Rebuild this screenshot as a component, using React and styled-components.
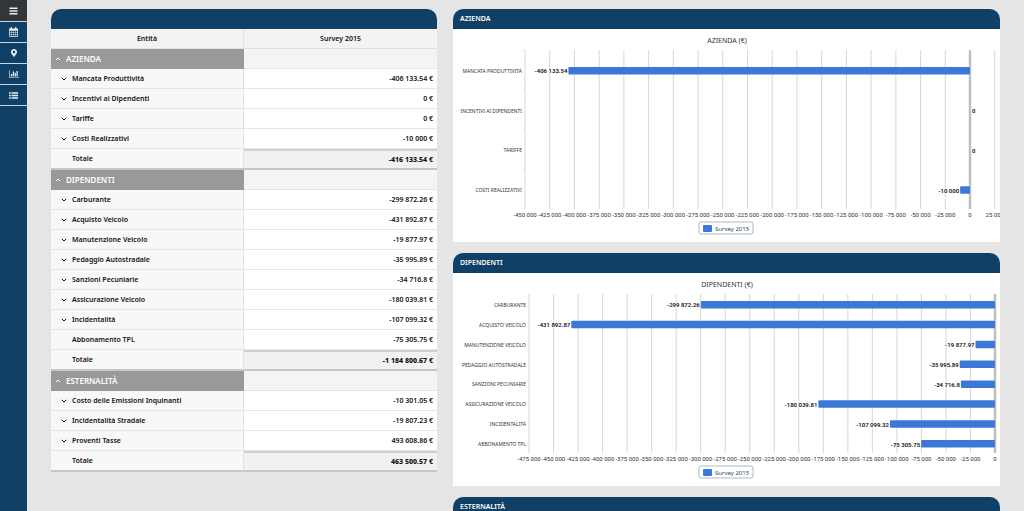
import { Fragment, useState } from 'react';
import styled, { createGlobalStyle } from 'styled-components';
import { FaMapMarkerAlt } from 'react-icons/fa';

const GlobalStyle = createGlobalStyle`
  * {
    box-sizing: border-box;
  }
  body {
    margin: 0;
    background-color: #e5e5e5;
    font-family: 'Noto Sans', 'Open Sans', sans-serif;
    font-size: 7px;
    color: #111;
  }
`;

const Page = styled.div`
  display: flex;
  height: 100vh;
  overflow: hidden;
`;

const Sidebar = styled.nav`
  display: flex;
  flex-direction: column;
  flex: 0 0 27px;
  background-color: #104065;
`;

const NavBtn = styled.button`
  display: flex;
  align-items: center;
  justify-content: center;
  height: ${(props) => (props.$menu ? '22px' : '21px')};
  padding: 0;
  border: none;
  border-bottom: 1px solid #c3d9ea;
  background-color: ${(props) => (props.$menu ? '#333638' : 'transparent')};
  color: #e6eff6;
  font-size: 8px;
  cursor: pointer;
`;

const Content = styled.main`
  display: grid;
  grid-template-columns: 386fr 547fr;
  gap: 16px;
  flex: 1;
  align-items: start;
  padding: 9px 24px 0;
`;

const Column = styled.div`
  display: flex;
  flex-direction: column;
  gap: 11px;
  min-width: 0;
`;

const Panel = styled.section`
  background-color: white;
  border-radius: 10px 10px 0 0;
  overflow: hidden;
`;

const PanelHeader = styled.h2`
  height: 20px;
  margin: 0;
  padding: 0 7px;
  background-color: #104065;
  color: white;
  font-size: 7px;
  font-weight: 600;
  line-height: 20px;
`;

const Table = styled.table`
  width: 100%;
  border-collapse: separate;
  border-spacing: 0;
  table-layout: fixed;
  line-height: 10px;
`;

const HeadCell = styled.th`
  height: 20px;
  padding: 0;
  border-right: 1px solid #e4e4e4;
  border-bottom: 1px solid #e0e0e0;
  background-color: #f3f3f3;
  font-weight: 600;
  &:last-child {
    border-right: none;
  }
`;

const SectionCell = styled.th`
  height: 20px;
  padding: 0 4px;
  background-color: #999;
  color: white;
  font-size: 8px;
  font-weight: 600;
  text-align: left;
`;

const EmptyCell = styled.td`
  padding: 0;
  border-bottom: 1px solid #e4e4e4;
  background-color: #f4f4f4;
`;

const NameCell = styled.th`
  height: ${(props) => (props.$total ? '21px' : '20px')};
  padding: 0 0 0 10px;
  border-right: 1px solid #e2e2e2;
  border-bottom: ${(props) =>
    props.$total ? '2px solid #c6c6c6' : '1px solid #e6e6e6'};
  background-color: #f8f8f8;
  font-weight: 600;
  text-align: left;
`;

const ValueCell = styled.td`
  padding: 0 4px 0 0;
  border-top: ${(props) => (props.$total ? '2px solid #d0d0d0' : 'none')};
  border-bottom: ${(props) =>
    props.$total ? '2px solid #c6c6c6' : '1px solid #e6e6e6'};
  background-color: ${(props) => (props.$total ? '#f1f1f1' : 'white')};
  font-weight: ${(props) => (props.$total ? 800 : 600)};
  text-align: right;
`;

const Toggle = styled.button`
  display: flex;
  align-items: center;
  gap: 5px;
  padding: 0;
  border: none;
  background: none;
  color: inherit;
  font: inherit;
  cursor: pointer;
`;

const Label = styled.span`
  display: block;
  padding-left: 11px;
`;

const Chart = styled.svg`
  display: block;
  width: 100%;
  height: auto;
`;

const ChartTitle = styled.text`
  fill: #333;
  font-size: 7px;
  text-anchor: middle;
`;

const TickText = styled.text`
  fill: #333;
  font-family: Roboto, sans-serif;
  font-size: 6px;
  text-anchor: middle;
`;

const CategoryText = styled.text`
  fill: #333;
  font-size: 5px;
  text-anchor: end;
`;

const BarText = styled.text`
  fill: #111;
  font-family: Roboto, sans-serif;
  font-size: 6px;
  font-weight: 600;
  text-anchor: ${(props) => props.$anchor};
  paint-order: stroke;
  stroke: white;
  stroke-width: 1px;
`;

const LegendText = styled.text`
  fill: #274b6d;
  font-size: 6px;
`;

const sections = [
  {
    name: 'AZIENDA',
    rows: [
      ['Mancata Produttività', -406133.54],
      ['Incentivi ai Dipendenti', 0],
      ['Tariffe', 0],
      ['Costi Realizzativi', -10000],
    ],
    total: -416133.54,
  },
  {
    name: 'DIPENDENTI',
    rows: [
      ['Carburante', -299872.26],
      ['Acquisto Veicolo', -431892.87],
      ['Manutenzione Veicolo', -19877.97],
      ['Pedaggio Autostradale', -35995.89],
      ['Sanzioni Pecuniarie', -34716.8],
      ['Assicurazione Veicolo', -180039.81],
      ['Incidentalità', -107099.32],
      ['Abbonamento TPL', -75305.75, true],
    ],
    total: -1184800.67,
  },
  {
    name: 'ESTERNALITÀ',
    rows: [
      ['Costo delle Emissioni Inquinanti', -10301.05],
      ['Incidentalità Stradale', -19807.23],
      ['Proventi Tasse', 493608.86],
    ],
    total: 463500.57,
  },
];

// 1184800.67 -> "1 184 800.67"
function formatNumber(value) {
  const [int, dec] = String(value).split('.');
  const grouped = int.replace(/\B(?=(\d{3})+(?!\d))/g, ' ');
  return dec ? `${grouped}.${dec}` : grouped;
}

function Chevron({ up }) {
  return (
    <svg width="6" height="4" viewBox="0 0 6 4" aria-hidden="true">
      <path
        d={up ? 'M0.8 3.2L3 1L5.200 3.2' : 'M0.8 0.8L3 3L5.200 0.8'}
        fill="none"
        stroke="currentColor"
        strokeWidth="1"
      />
    </svg>
  );
}

function MenuIcon() {
  return (
    <svg width="9" height="8" viewBox="0 0 18 16" aria-hidden="true">
      <path
        fill="currentColor"
        d="M1 1h16v3H1zM1 6.500h16v3H1zM1 12h16v3H1z"
      />
    </svg>
  );
}

function CalendarIcon() {
  return (
    <svg width="9" height="10" viewBox="0 0 18 20" aria-hidden="true">
      <path
        fill="currentColor"
        fillRule="evenodd"
        d="M1.5 3H3V1.5Q3 0 4.500 0T6 1.500V3H12V1.500Q12 0 13.500 0T15 1.500V3H16.500Q18 3 18 4.500V18Q18 19.500 16.500 19.500H1.500Q0 19.500 0 18V4.500Q0 3 1.500 3ZM1.300 7.500V10.500H4.600V7.500ZM5.400 7.500V10.500H8.600V7.500ZM9.400 7.500V10.500H12.600V7.500ZM13.400 7.500V10.500H16.700V7.500ZM1.300 11.300V14.500H4.600V11.300ZM5.400 11.300V14.500H8.600V11.300ZM9.400 11.300V14.500H12.600V11.300ZM13.400 11.300V14.500H16.700V11.300ZM1.300 15.300V18.200H4.600V15.300ZM5.400 15.300V18.200H8.600V15.300ZM9.400 15.300V18.200H12.600V15.300ZM13.400 15.300V18.200H16.700V15.300Z"
      />
    </svg>
  );
}

function BarChartIcon() {
  return (
    <svg width="10" height="8" viewBox="0 0 2048 1536" aria-hidden="true">
      <path
        fill="currentColor"
        d="M640 768v512h-256v-512h256zM1024 256v1024h-256v-1024h256zM2048 1408v128h-2048v-1536h128v1408h1920zM1408 512v768h-256v-768h256zM1792 128v1152h-256v-1152h256z"
      />
    </svg>
  );
}

function ListIcon() {
  return (
    <svg width="9" height="7" viewBox="0 0 18 14" aria-hidden="true">
      <path
        fill="currentColor"
        d="M0 0.500h3.500v3H0zM5 0.500H18v3H5zM0 5.500h3.500v3H0zM5 5.500H18v3H5zM0 10.500h3.500v3H0zM5 10.500H18v3H5z"
      />
    </svg>
  );
}

function BarChart({ section, left, zero, min, max }) {
  const top = 21;
  const bottom = 180;
  const scale = (zero - left) / -min;
  const x = (value) => zero + value * scale;
  const step = (bottom - top) / section.rows.length;
  const ticks = [];
  for (let t = min; t <= max; t += 25000) ticks.push(t);

  return (
    <Chart viewBox="0 0 547 213" role="img" aria-label={section.name}>
      <ChartTitle x="274" y="14">
        {section.name} (€)
      </ChartTitle>
      {ticks.map((t) => (
        <g key={t}>
          <line
            x1={x(t)}
            x2={x(t)}
            y1={top}
            y2={bottom}
            stroke={t === 0 ? '#c0c0c0' : '#d8d8d8'}
            strokeWidth={t === 0 ? 2.5 : 1}
          />
          <TickText x={x(t)} y="188">
            {formatNumber(t)}
          </TickText>
        </g>
      ))}
      {section.rows.map(([name, value], i) => {
        const mid = top + step * (i + 0.5);
        return (
          <g key={name}>
            <line
              x1={left - 2}
              x2={left}
              y1={mid - step / 2}
              y2={mid - step / 2}
              stroke="#d0d8e0"
              strokeWidth="0.7"
            />
            <CategoryText x={left - 3} y={mid + 3}>
              {name.toUpperCase()}
            </CategoryText>
            {value !== 0 && (
              <rect
                x={x(value)}
                y={mid - 3}
                width={zero - x(value)}
                height="7.500"
                rx="1"
                fill="#3c78d8"
              />
            )}
            <BarText
              x={value === 0 ? zero + 2 : x(value) - 1}
              y={mid + 3.5}
              $anchor={value === 0 ? 'start' : 'end'}
            >
              {formatNumber(value)}
            </BarText>
          </g>
        );
      })}
      <rect
        x="246"
        y="193"
        width="54"
        height="12"
        rx="2"
        fill="white"
        stroke="#a0a4aa"
        strokeWidth="0.8"
      />
      <rect x="250" y="196" width="9" height="7" rx="1" fill="#3c78d8" />
      <LegendText x="262" y="202">
        Survey 2015
      </LegendText>
    </Chart>
  );
}

function SurveyTable() {
  const [closed, setClosed] = useState([]);

  function toggleSection(name) {
    setClosed((prev) =>
      prev.includes(name) ? prev.filter((n) => n !== name) : [...prev, name]
    );
  }

  return (
    <Table>
      <thead>
        <tr>
          <HeadCell scope="col">Entità</HeadCell>
          <HeadCell scope="col">Survey 2015</HeadCell>
        </tr>
      </thead>
      <tbody>
        {sections.map((section) => (
          <Fragment key={section.name}>
            <tr>
              <SectionCell scope="row">
                <Toggle onClick={() => toggleSection(section.name)}>
                  <Chevron up={!closed.includes(section.name)} />
                  {section.name}
                </Toggle>
              </SectionCell>
              <EmptyCell />
            </tr>
            {!closed.includes(section.name) &&
              section.rows.map(([name, value, leaf]) => (
                <tr key={name}>
                  <NameCell scope="row">
                    {leaf ? (
                      <Label>{name}</Label>
                    ) : (
                      <Toggle>
                        <Chevron />
                        {name}
                      </Toggle>
                    )}
                  </NameCell>
                  <ValueCell>{formatNumber(value)} €</ValueCell>
                </tr>
              ))}
            <tr>
              <NameCell scope="row" $total>
                <Label>Totale</Label>
              </NameCell>
              <ValueCell $total>{formatNumber(section.total)} €</ValueCell>
            </tr>
          </Fragment>
        ))}
      </tbody>
    </Table>
  );
}

function App() {
  return (
    <>
      <GlobalStyle />
      <Page>
        <Sidebar>
          <NavBtn $menu aria-label="Menu">
            <MenuIcon />
          </NavBtn>
          <NavBtn>
            <CalendarIcon />
          </NavBtn>
          <NavBtn>
            <FaMapMarkerAlt />
          </NavBtn>
          <NavBtn>
            <BarChartIcon />
          </NavBtn>
          <NavBtn>
            <ListIcon />
          </NavBtn>
        </Sidebar>
        <Content>
          <Column>
            <Panel>
              <PanelHeader />
              <SurveyTable />
            </Panel>
          </Column>
          <Column>
            <Panel>
              <PanelHeader>AZIENDA</PanelHeader>
              <BarChart
                section={sections[0]}
                left={72}
                zero={517}
                min={-450000}
                max={25000}
              />
            </Panel>
            <Panel>
              <PanelHeader>DIPENDENTI</PanelHeader>
              <BarChart
                section={sections[1]}
                left={76}
                zero={542}
                min={-475000}
                max={0}
              />
            </Panel>
            <Panel>
              <PanelHeader>ESTERNALITÀ</PanelHeader>
            </Panel>
          </Column>
        </Content>
      </Page>
    </>
  );
}

export default App;
